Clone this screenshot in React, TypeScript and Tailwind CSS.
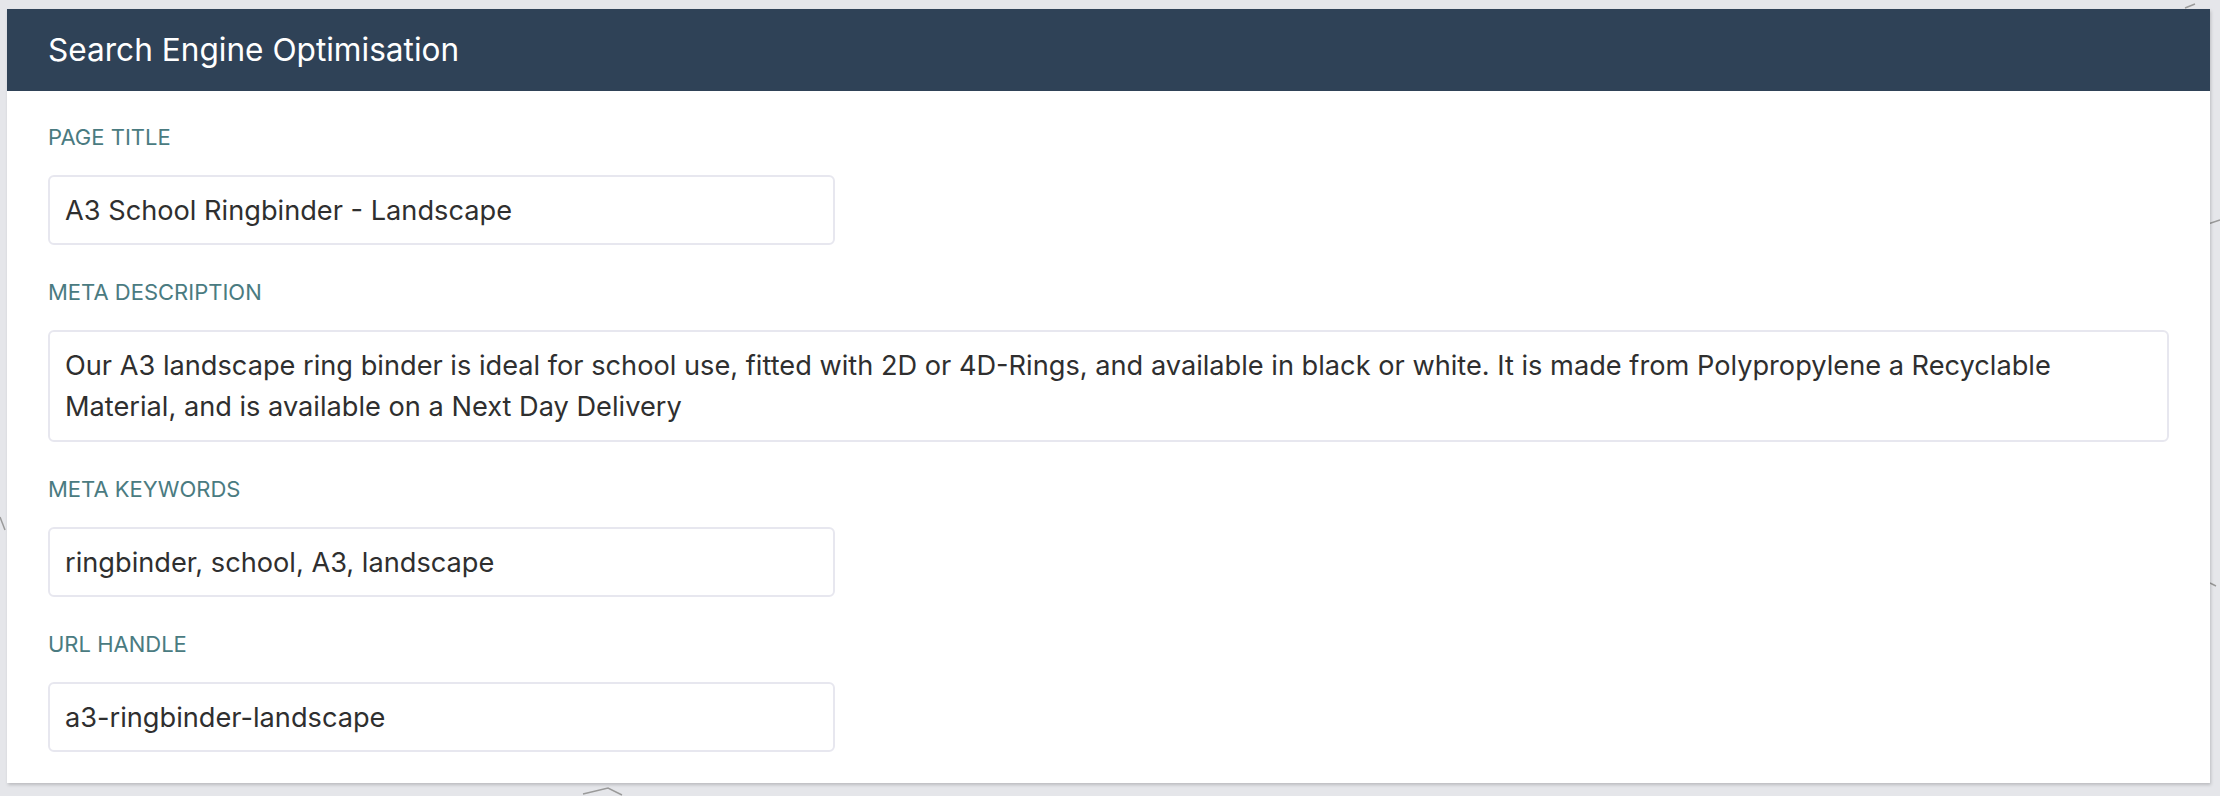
import React from "react";

const font = { fontFamily: "Inter, 'Noto Sans', 'Liberation Sans', sans-serif" };

function Label({ children }: { children: React.ReactNode }) {
  return (
    <div className="text-[22px] leading-[28px] uppercase text-[#4a7b81] mb-[24px]">{children}</div>
  );
}

function Field({ label, value, width }: { label: string; value: string; width: string }) {
  return (
    <div className="flex flex-col">
      <Label>{label}</Label>
      <input
        readOnly
        value={value}
        className={`${width} h-[70px] border-2 border-[#e7e7ef] rounded-[6px] px-[15px] text-[27.2px] text-[#2f2f2f] bg-white outline-none`}
        style={font}
      />
    </div>
  );
}

export default function App() {
  return (
    <div className="relative w-full h-[796px] bg-[#e5e6ea] pt-[9px] pl-[7px] pr-[10px] overflow-hidden" style={font}>
      <svg className="absolute inset-0 w-full h-full" width="2220" height="796">
        <g stroke="#9a9a9a" strokeWidth="1.5" fill="none">
          <path d="M2185 8 L2195 4" />
          <path d="M2208 224 L2220 220" />
          <path d="M2210 583 L2216 586" />
          <path d="M0 517 L5 530" />
          <path d="M583 794 L608 788 L622 795" />
        </g>
      </svg>
      <div className="relative bg-white shadow-[1px_2px_3px_rgba(0,0,0,0.18)]">
        <div className="h-[82px] bg-[#2f4257] flex items-center px-[41px]">
          <h2 className="text-[31.6px] text-white font-normal">Search Engine Optimisation</h2>
        </div>
        <div className="flex flex-col gap-[33px] px-[41px] pt-[32px] pb-[31px]">
          <Field label="Page Title" value="A3 School Ringbinder - Landscape" width="w-[787px]" />
          <div className="flex flex-col">
            <Label>Meta Description</Label>
            <div className="w-full h-[112px] border-2 border-[#e7e7ef] rounded-[6px] px-[15px] py-[13px] text-[27.2px] leading-[41px] text-[#2f2f2f]">
              <div className="whitespace-nowrap">
                Our A3 landscape ring binder is ideal for school use, fitted with 2D or 4D-Rings, and available in black or white. It is made from Polypropylene a Recyclable
              </div>
              <div className="whitespace-nowrap">Material, and is available on a Next Day Delivery</div>
            </div>
          </div>
          <Field label="Meta Keywords" value="ringbinder, school, A3, landscape" width="w-[787px]" />
          <Field label="URL Handle" value="a3-ringbinder-landscape" width="w-[787px]" />
        </div>
      </div>
    </div>
  );
}
